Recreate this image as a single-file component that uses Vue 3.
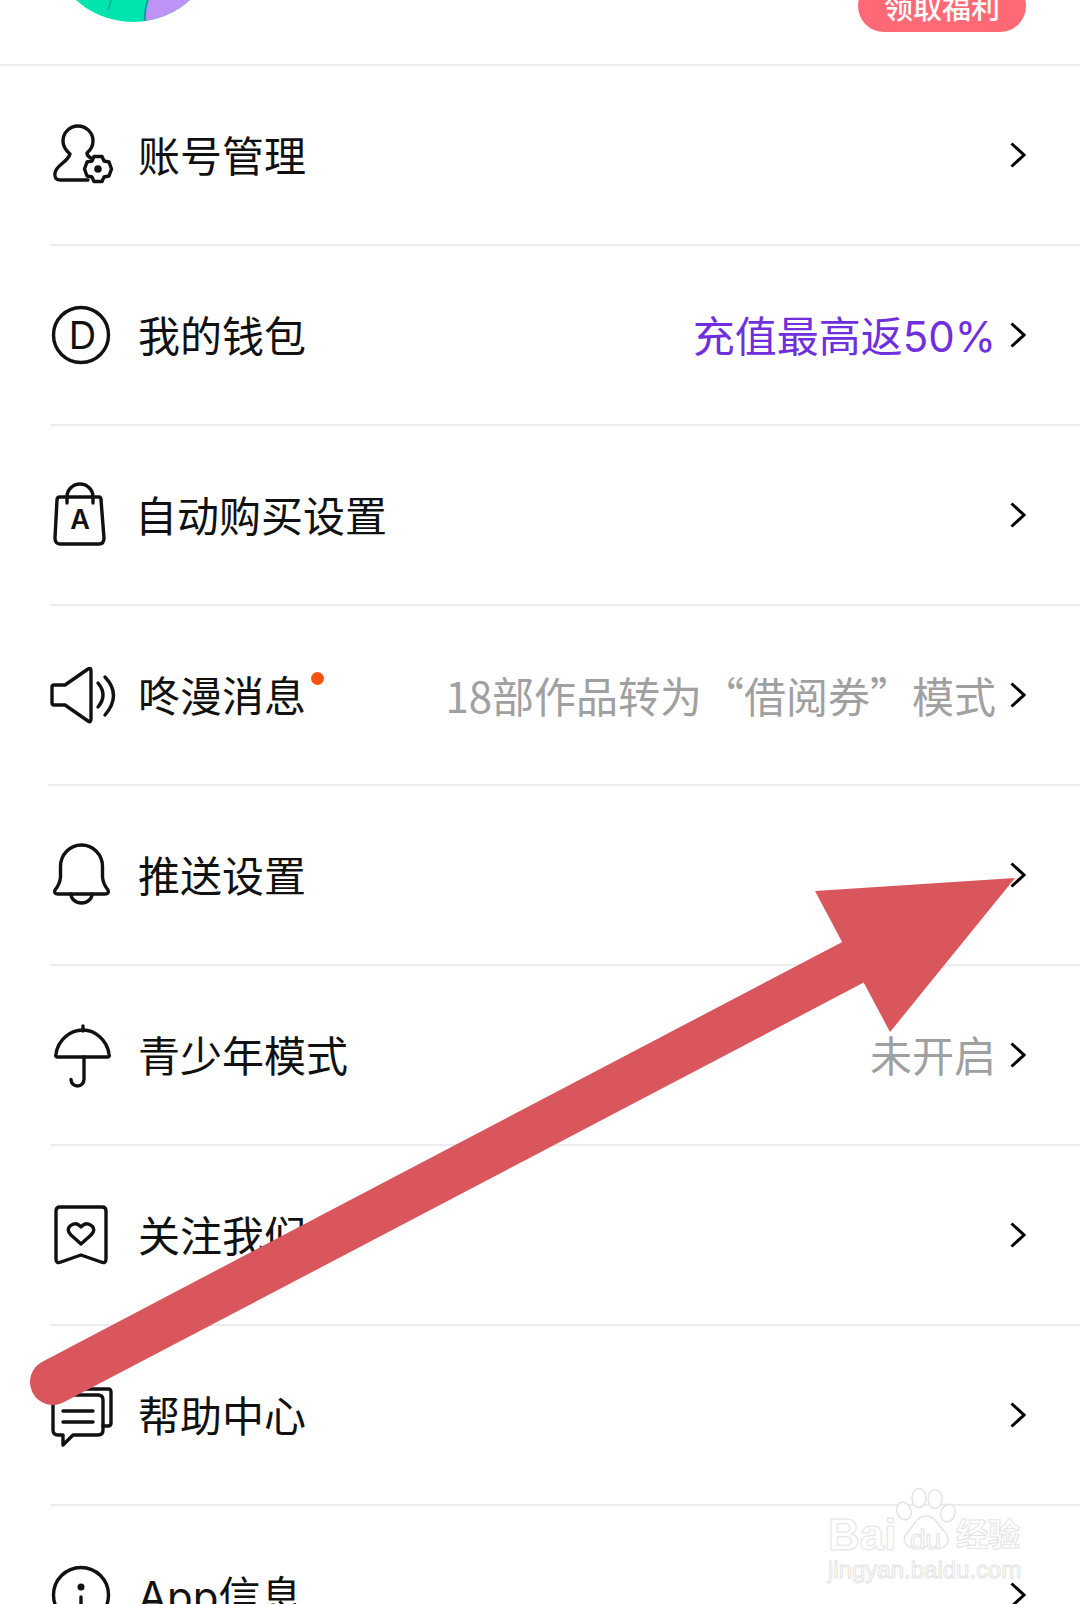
<script setup>
const rows = [
  { key: "account", label: "账号管理" },
  { key: "wallet", label: "我的钱包", sub: "充值最高返50%", subClass: "sub-purple" },
  { key: "bag", label: "自动购买设置", nudge: true },
  { key: "speaker", label: "咚漫消息", sub: "18部作品转为“借阅券”模式", subClass: "sub-notice", dot: true, tight: true },
  { key: "bell", label: "推送设置" },
  { key: "umbrella", label: "青少年模式", sub: "未开启" },
  { key: "follow", label: "关注我们" },
  { key: "help", label: "帮助中心" },
  { key: "info", label: "App信息" }
];
</script>

<template>
  <div class="page">
    <header class="top">
      <svg class="avatar" width="170" height="170" viewBox="0 0 170 170">
        <defs>
          <clipPath id="avatar-clip"><circle cx="85" cy="85" r="85" /></clipPath>
        </defs>
        <g clip-path="url(#avatar-clip)">
          <rect width="170" height="170" fill="#00e4ae" />
          <path d="M100 148Q96 158 97 172H172V130H100Z" fill="#bd93f5" />
          <path d="M100 148Q96 158 97 172" fill="none" stroke="#00a3a3" stroke-width="2" />
          <path d="M64 146Q62 152 60 158" fill="none" stroke="#00b5a5" stroke-width="2" />
        </g>
      </svg>
      <button class="reward">领取福利</button>
    </header>
    <div class="divider full"></div>

    <template v-for="row in rows" :key="row.key">
      <div class="row">
        <svg class="icon" width="70" height="70" viewBox="0 0 70 70">
          <template v-if="row.key === 'account'">
            <path d="M40 60H12Q6 60 7 53C8 45 20 42 22 34Q15 28 15 21A15 15 0 0 1 45 21Q45 28 39 33Q39 36 43 38" />
            <path d="M46 36.5H54L56 41L61 42L63.5 49L61 56L56 57L54 61.5H46L44 57L39 56L36.5 49L39 42L44 41Z" fill="#fff" />
            <circle cx="50" cy="49" r="3.8" class="solid" />
          </template>
          <template v-else-if="row.key === 'wallet'">
            <circle cx="33" cy="35" r="27.5" />
            <text x="34.5" y="49" text-anchor="middle" class="icon-letter d">D</text>
          </template>
          <template v-else-if="row.key === 'bag'">
            <path d="M12 17H51Q53 17 53 20L56 58Q56 64 51 64H12Q7 64 7 58L9 20Q9 17 12 17Z" />
            <path d="M19 23V17A13 13 0 0 1 45 17V23" />
            <text x="32" y="49" text-anchor="middle" class="icon-letter a">A</text>
          </template>
          <template v-else-if="row.key === 'speaker'">
            <path d="M6 25H17L40 9Q43 7 43 11V59Q43 63 40 61L17 45H6Q4 45 4 43V27Q4 25 6 25Z" />
            <path d="M50 23Q60 35 50 47M57 17Q74 35 57 55" />
          </template>
          <template v-else-if="row.key === 'bell'">
            <path d="M12.5 37V26.5A21 21.5 0 0 1 54.5 26.5V37Q55 44 60 50Q61.5 54 57 54H10Q5.5 54 7 50Q12 44 12.5 37Z" />
            <path d="M23 54A10.5 9 0 0 0 44 54" />
          </template>
          <template v-else-if="row.key === 'umbrella'">
            <path d="M35 6V11" />
            <path d="M10 37Q7 37 8 34C10 20 22 10 35 10C47 10 59 20 61 34Q62 37 59 37Z" />
            <path d="M36 37V59.5A6.5 6.5 0 0 1 23 59.5" />
          </template>
          <template v-else-if="row.key === 'follow'">
            <path d="M12 7H54Q58 7 58 11V59Q58 64 53 62L33 55L13 62Q8 64 8 59V11Q8 7 12 7Z" />
            <path d="M33 44L23 35Q18 30 22 26Q28 21 33 27Q38 21 44 26Q48 30 43 35Z" />
          </template>
          <template v-else-if="row.key === 'help'">
            <path d="M18 9H60Q63 9 63 12V43Q63 46 60 46H55" />
            <path d="M10 15H50Q55 15 55 20V50Q55 55 50 55H25L15 65V55H10Q5 55 5 50V20Q5 15 10 15Z" />
            <path d="M15 31H45M15 42H45" />
          </template>
          <template v-else>
            <circle cx="33" cy="35" r="27.5" />
            <circle cx="33" cy="27" r="3.5" class="solid" />
            <path d="M33 37V50" />
          </template>
        </svg>
        <div class="label-wrap" :class="{ nudge: row.nudge }">
          <span class="label">{{ row.label }}</span>
          <i v-if="row.dot" class="dot"></i>
        </div>
        <span v-if="row.sub" class="sub" :class="row.subClass">{{ row.sub }}</span>
        <svg class="chevron" width="16" height="26" viewBox="0 0 16 26">
          <path d="M1.5 1.5L14 13L1.5 24.5" />
        </svg>
      </div>
      <div class="divider" :class="{ tight: row.tight }"></div>
    </template>

    <!-- screenshot annotation and site watermark sit on top of the page -->
    <svg class="arrow" width="1080" height="1604" viewBox="0 0 1080 1604">
      <path d="M53 1382L852.5 962.5" stroke="#d9565c" stroke-width="46" stroke-linecap="round" fill="none" />
      <path d="M1015 878L815 891L890 1032Z" fill="#d9565c" />
    </svg>
    <div class="watermark">
      <svg class="paw" width="66" height="66" viewBox="0 0 66 66">
        <ellipse cx="10" cy="23" rx="7" ry="9" transform="rotate(-20 10 23)" />
        <ellipse cx="25" cy="10" rx="7" ry="9.5" />
        <ellipse cx="41" cy="11" rx="7" ry="9.5" />
        <ellipse cx="54" cy="25" rx="7" ry="9" transform="rotate(20 54 25)" />
        <path d="M32 28C42 28 44 38 51 44C58 52 52 61 44 60Q33 57 22 60C13 61 6 52 14 44C20 38 22 28 32 28Z" />
      </svg>
      <span class="wm-bai">Bai</span>
      <span class="wm-du">du</span>
      <span class="wm-jy">经验</span>
      <span class="wm-url">jingyan.baidu.com</span>
    </div>
  </div>
</template>

<style scoped>
.page {
  position: relative;
  width: 1080px;
  height: 1604px;
  overflow: hidden;
  background: #fff;
  color: #111;
  font-family: Inter, "Noto Sans CJK SC", sans-serif;
}

.top {
  height: 64px;
  padding: 0 54px 0 48px;
  overflow: hidden;
  display: flex;
  justify-content: space-between;
  align-items: flex-start;
}

.avatar {
  flex: none;
  margin-top: -148px;
}

.reward {
  width: 168px;
  height: 52px;
  margin-top: -20px;
  border: 0;
  border-radius: 26px;
  background: #ff6975;
  color: #fff;
  font-family: inherit;
  font-size: 29px;
  font-weight: 500;
  padding: 0;
}

.divider {
  height: 2px;
  margin-left: 51px;
  background: #ececec;
}

.divider.full {
  margin-left: 0;
}

.divider.tight {
  margin-left: 48px;
}

.row {
  height: 178px;
  padding: 0 54px 0 48px;
  display: flex;
  align-items: center;
}

.icon {
  flex: none;
  overflow: visible;
  fill: none;
  stroke: #111;
  stroke-width: 3.4;
  stroke-linecap: round;
  stroke-linejoin: round;
}

.icon .solid {
  fill: #111;
  stroke: none;
}

.icon-letter {
  fill: #111;
  stroke: none;
  font-family: Inter, sans-serif;
}

.icon-letter.d {
  font-size: 38px;
  font-weight: 400;
}

.icon-letter.a {
  font-size: 27px;
  font-weight: 600;
}

.label-wrap {
  position: relative;
  margin-left: 20px;
  display: flex;
}

.label-wrap.nudge {
  margin-left: 17px;
}

.label {
  font-size: 42px;
  line-height: 56px;
  padding-top: 4px;
}

.dot {
  position: absolute;
  top: 7px;
  right: -18px;
  width: 13px;
  height: 13px;
  border-radius: 50%;
  background: #f95210;
}

.sub {
  margin-left: auto;
  font-size: 42px;
  line-height: 56px;
  padding-top: 4px;
  color: #a0a0a0;
}

.sub-purple {
  color: #6f2fdc;
}

.sub-notice {
  padding-top: 0;
  font-family: "Noto Sans CJK SC", sans-serif;
}

.chevron {
  flex: none;
  margin-left: 14px;
  fill: none;
  stroke: #000;
  stroke-width: 3;
}

.label-wrap + .chevron {
  margin-left: auto;
}

.arrow {
  position: absolute;
  top: 0;
  left: 0;
}

.watermark {
  position: absolute;
  left: 826px;
  top: 1486px;
  width: 200px;
  height: 100px;
  color: #fff;
  -webkit-text-stroke: 1px #e4e4e4;
  font-family: "Liberation Sans", sans-serif;
}

.watermark span {
  position: absolute;
  white-space: nowrap;
  line-height: 1;
}

.paw {
  position: absolute;
  left: 68px;
  top: 2px;
  fill: #fff;
  stroke: #e4e4e4;
  stroke-width: 1.5;
}

.wm-bai {
  left: 2px;
  top: 27px;
  font-size: 44px;
  font-weight: 700;
}

.wm-du {
  left: 84px;
  top: 40px;
  font-size: 28px;
}

.wm-jy {
  left: 130px;
  top: 30px;
  font-size: 32px;
  font-family: "Noto Sans CJK SC", sans-serif;
  font-weight: 700;
}

.wm-url {
  left: 2px;
  top: 72px;
  font-size: 24px;
}
</style>

<style>
body {
  background: #fff;
}
</style>
